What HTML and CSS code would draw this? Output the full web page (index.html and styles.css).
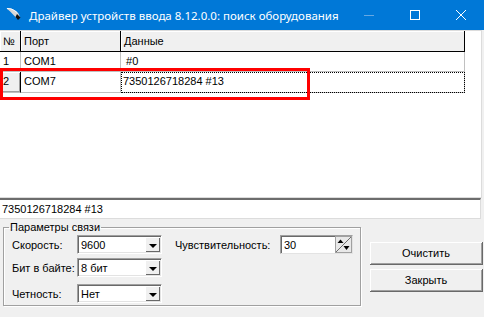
FILE: index.html
```html
<!DOCTYPE html>
<html>
<head>
    <title>Драйвер устройств ввода</title>
    <link rel="stylesheet" href="styles.css">
</head>
<body>
    <div class="titlebar">
        <svg class="title-icon" width="16" height="14" viewBox="0 0 16 14">
            <path d="M0.5 1.5 C4 0.5 9 2.5 12.5 6.5 L14 10 L11 11.5 L8 8.5 C6 6 3 3.5 0.5 1.5 Z" fill="#d8d8d8"/>
            <path d="M1 1.6 C4 1 8 2.6 11.5 6" stroke="#fff" stroke-width="1" fill="none"/>
            <path d="M11 7 L14.5 10.5 L12 13 L9.5 10 Z" fill="#111"/>
        </svg>
        <span class="title">Драйвер устройств ввода 8.12.0.0: поиск оборудования</span>
        <div class="controls">
            <div class="ctl">
                <svg width="10" height="10" viewBox="0 0 10 10"><line x1="0" y1="5.5" x2="10" y2="5.5" stroke="#66a8e3" stroke-width="1"/></svg>
            </div>
            <div class="ctl">
                <svg width="10" height="10" viewBox="0 0 10 10"><rect x="0.5" y="0.5" width="9" height="9" stroke="#fff" stroke-width="1" fill="none"/></svg>
            </div>
            <div class="ctl">
                <svg width="10" height="10" viewBox="0 0 10 10"><path d="M0 0 L10 10 M10 0 L0 10" stroke="#fff" stroke-width="1"/></svg>
            </div>
        </div>
    </div>

    <div class="grid-area">
        <div class="grid">
            <div class="hcell">№</div>
            <div class="hcell">Порт</div>
            <div class="hcell">Данные</div>

            <div class="cell">1</div>
            <div class="cell">COM1</div>
            <div class="cell data">&nbsp;#0</div>

            <div class="cell fixed">2</div>
            <div class="cell">COM7</div>
            <div class="cell data focus">7350126718284 #13</div>
        </div>
        <div class="mark"></div>
    </div>

    <div class="result">7350126718284 #13</div>

    <div class="bottom">
        <fieldset class="params">
            <legend>Параметры связи</legend>
            <div class="row row1">
                <span class="label">Скорость:</span>
                <div class="combo"><span>9600</span><div class="drop"><div class="arrow"></div></div></div>
                <span class="sens">Чувствительность:</span>
                <div class="spin">
                    <span>30</span>
                    <svg class="spin-btn" width="17" height="17" viewBox="0 0 17 17">
                        <rect x="0.5" y="0.5" width="16" height="16" fill="#e8e8e8" stroke="#a0a0a0"/>
                        <line x1="1" y1="16" x2="16" y2="1" stroke="#6d6d6d" stroke-width="1"/>
                        <path d="M2.5 7 L5.5 3.5 L8.5 7 Z" fill="#000"/>
                        <path d="M8.5 10 L14.5 10 L11.5 14 Z" fill="#000"/>
                    </svg>
                </div>
            </div>
            <div class="row row2">
                <span class="label">Бит в байте:</span>
                <div class="combo"><span>8 бит</span><div class="drop"><div class="arrow"></div></div></div>
            </div>
            <div class="row row3">
                <span class="label">Четность:</span>
                <div class="combo"><span>Нет</span><div class="drop"><div class="arrow"></div></div></div>
            </div>
        </fieldset>

        <div class="buttons">
            <button class="btn">Очистить</button>
            <button class="btn">Закрыть</button>
        </div>
    </div>
</body>
</html>
```

FILE: styles.css
```css
body {
  margin: 0;
  width: 484px;
  height: 317px;
  overflow: hidden;
  background-color: #f0f0f0;
  color: #000;
  font-family: "Liberation Sans", Arial, sans-serif;
  font-size: 11px;
}
.titlebar {
  height: 30px;
  background-color: #0078d7;
  color: #fff;
  display: flex;
  align-items: center;
  font-family: "Noto Sans", "Open Sans", sans-serif;
  font-size: 11.5px;
}
.title-icon {
  flex: none;
  margin-left: 6px;
  margin-top: -2px;
}
.title {
  flex: none;
  margin-left: 7px;
  white-space: nowrap;
}
.controls {
  margin-left: auto;
  display: flex;
  height: 30px;
}
.ctl {
  width: 46px;
  display: flex;
  align-items: center;
  justify-content: center;
}
.grid-area {
  position: relative;
  height: 166px;
  width: 481px;
  background-color: #fff;
  border-right: 1px solid #dcdcdc;
  border-top: 1px solid #dcdcdc;
  border-bottom: 1px solid #dcdcdc;
}
.grid {
  display: grid;
  grid-template-columns: 21px 100px 344px;
  grid-template-rows: 21px 20px 21px;
  width: 465px;
}
.hcell {
  background-color: #f0f0f0;
  border-right: 1px solid #000;
  border-bottom: 1px solid #000;
  box-shadow: inset 1px 1px #fff;
  padding-left: 3px;
  line-height: 20px;
}
.cell {
  border-right: 1px solid #c0c0c0;
  border-bottom: 1px solid #c0c0c0;
  padding-left: 3px;
  line-height: 19px;
}
.cell.data {
  padding-left: 2px;
}
.fixed {
  background-color: #f0f0f0;
  border-right: 1px solid #000;
  box-shadow: inset 1px 1px #fff, inset -1px -1px #a0a0a0;
}
.focus {
  outline: 1px dotted #000;
  outline-offset: -1px;
}
.mark {
  position: absolute;
  left: 0;
  top: 37px;
  width: 310px;
  height: 32px;
  border: 3px solid #ff0000;
  box-sizing: border-box;
}
.result {
  height: 18px;
  width: 478px;
  background-color: #fff;
  border-top: 2px solid #6d6d6d;
  border-right: 1px solid #dcdcdc;
  border-bottom: 1px solid #dcdcdc;
  padding-left: 2px;
  line-height: 18px;
}
.bottom {
  display: flex;
  margin-top: 2px;
}
.params {
  margin: 0 0 0 3px;
  padding: 0;
  width: 358px;
  height: 85px;
  border: 1px solid #a0a0a0;
  box-shadow: 1px 1px #fff, inset 1px 1px #fff;
  box-sizing: border-box;
}
.params legend {
  margin-left: 5px;
  padding: 0 1px;
  line-height: 13px;
}
.row {
  display: flex;
  align-items: center;
  height: 19px;
}
.row1 {
  margin-top: 1px;
}
.row2 {
  margin-top: 4px;
}
.row3 {
  margin-top: 7px;
}
.label {
  width: 65px;
  padding-left: 8px;
}
.sens {
  width: 103px;
  margin-left: 13px;
}
.combo {
  width: 85px;
  height: 19px;
  box-sizing: border-box;
  background-color: #fff;
  border-top: 1px solid #a0a0a0;
  border-left: 1px solid #a0a0a0;
  border-right: 1px solid #fff;
  border-bottom: 1px solid #fff;
  box-shadow: inset 1px 1px #696969, inset -1px -1px #e3e3e3;
  display: flex;
  align-items: center;
  padding-left: 3px;
}
.combo span {
  flex: 1;
}
.drop {
  width: 15px;
  height: 15px;
  margin-right: 1px;
  background-color: #f0f0f0;
  box-shadow: inset 1px 1px #fff, inset -1px -1px #696969;
  display: flex;
  align-items: center;
  justify-content: center;
}
.arrow {
  width: 0;
  height: 0;
  border-left: 4px solid transparent;
  border-right: 4px solid transparent;
  border-top: 4px solid #000;
  margin-top: 2px;
}
.spin {
  margin-left: 2px;
  width: 73px;
  height: 19px;
  box-sizing: border-box;
  background-color: #fff;
  border-top: 1px solid #a0a0a0;
  border-left: 1px solid #a0a0a0;
  border-right: 1px solid #e3e3e3;
  border-bottom: 1px solid #e3e3e3;
  box-shadow: inset 1px 1px #696969;
  display: flex;
  align-items: center;
  padding-left: 3px;
}
.spin span {
  flex: 1;
}
.spin-btn {
  display: block;
}
.buttons {
  display: flex;
  flex-direction: column;
  margin-left: 9px;
  margin-top: 21px;
}
.btn {
  width: 113px;
  height: 23px;
  margin-bottom: 4px;
  padding: 0;
  font-family: "Liberation Sans", Arial, sans-serif;
  font-size: 11px;
  color: #000;
  background-color: #f0f0f0;
  border: none;
  border-right: 1px solid #696969;
  border-bottom: 1px solid #696969;
  box-shadow: inset 1px 1px #fff, inset -1px -1px #a0a0a0;
}
```
